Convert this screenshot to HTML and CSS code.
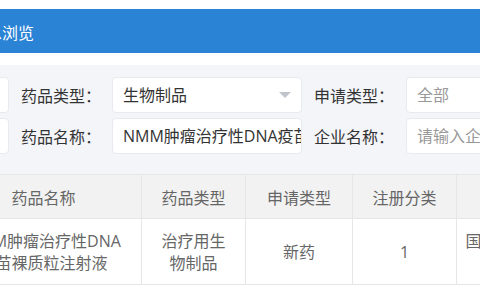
FILE: index.html
```html
<!DOCTYPE html>
<html lang="zh-CN">
<head>
    <meta charset="UTF-8">
    <meta name="viewport" content="width=device-width, initial-scale=1.0">
    <title>药品信息浏览</title>
    <link rel="stylesheet" href="styles.css">
</head>
<body>
    <div class="page">
        <header class="title-bar">
            <span class="title">信息浏览</span>
        </header>

        <div class="filter">
            <div class="filter-grid">
                <div class="field"></div>
                <label class="label">药品类型：</label>
                <div class="field select">
                    <span class="value">生物制品</span>
                    <i class="arrow"></i>
                </div>
                <label class="label">申请类型：</label>
                <div class="field muted">全部</div>

                <div class="field"></div>
                <label class="label">药品名称：</label>
                <div class="field">NMM肿瘤治疗性DNA疫苗裸质粒注射液</div>
                <label class="label">企业名称：</label>
                <div class="field muted">请输入企业名称</div>
            </div>
        </div>

        <table class="result">
            <colgroup>
                <col class="c-name">
                <col class="c-type">
                <col class="c-apply">
                <col class="c-reg">
                <col class="c-corp">
            </colgroup>
            <thead>
                <tr>
                    <th>药品名称</th>
                    <th>药品类型</th>
                    <th>申请类型</th>
                    <th>注册分类</th>
                    <th>企业名称</th>
                </tr>
            </thead>
            <tbody>
                <tr>
                    <td class="name">NMM肿瘤治疗性DNA疫苗裸质粒注射液</td>
                    <td>治疗用生物制品</td>
                    <td>新药</td>
                    <td>1</td>
                    <td class="corp">国药集团中国生物技术股份有限公司</td>
                </tr>
            </tbody>
        </table>
    </div>
</body>
</html>
```

FILE: styles.css
```css
body {
    margin: 0;
    padding: 0;
    background-color: #fff;
    font-family: "Open Sans", "Noto Sans CJK SC", sans-serif;
    color: #333;
}
.page {
    width: 480px;
    height: 300px;
    overflow: hidden;
    padding-top: 9px;
    box-sizing: border-box;
}
.title-bar {
    background-color: #2b83d5;
    height: 40px;
    padding-top: 4px;
    line-height: 40px;
    overflow: hidden;
    white-space: nowrap;
}
.title {
    display: inline-block;
    margin-left: -30px;
    color: #fff;
    font-size: 16px;
}
.filter {
    margin-top: 12px;
    background-color: #f4f5f9;
    padding: 12px 0 20px;
}
.filter-grid {
    display: grid;
    grid-template-columns: 190px 103px 190px 104px 190px;
    grid-auto-rows: 36px;
    row-gap: 5px;
    margin-left: -181px;
    align-items: center;
}
.label {
    padding-left: 12px;
    font-size: 16px;
    color: #333;
    white-space: nowrap;
}
.field {
    height: 36px;
    box-sizing: border-box;
    background-color: #fff;
    border: 1px solid #e8eaef;
    border-radius: 4px;
    padding: 0 10px;
    font-size: 16px;
    line-height: 34px;
    color: #333;
    white-space: nowrap;
    overflow: hidden;
}
.field.muted {
    color: #999;
}
.select {
    display: flex;
    justify-content: space-between;
    align-items: center;
}
.arrow {
    width: 0;
    height: 0;
    border-left: 6px solid transparent;
    border-right: 6px solid transparent;
    border-top: 6px solid #c0c4cc;
}
.result {
    border-collapse: collapse;
    table-layout: fixed;
    width: 711px;
    margin-left: -55px;
    font-size: 16px;
    color: #666;
}
.c-name { width: 196px; }
.c-type { width: 104px; }
.c-apply { width: 107px; }
.c-reg { width: 104px; }
.c-corp { width: 200px; }
.result th,
.result td {
    border: 1px solid #e6e6e6;
    text-align: center;
    font-weight: normal;
    padding: 0 13px;
}
.result th {
    background-color: #f2f2f2;
    height: 43px;
}
.result td {
    height: 65px;
    line-height: 22px;
}
.result td.corp {
    padding: 0 12px 0 6px;
}
```
